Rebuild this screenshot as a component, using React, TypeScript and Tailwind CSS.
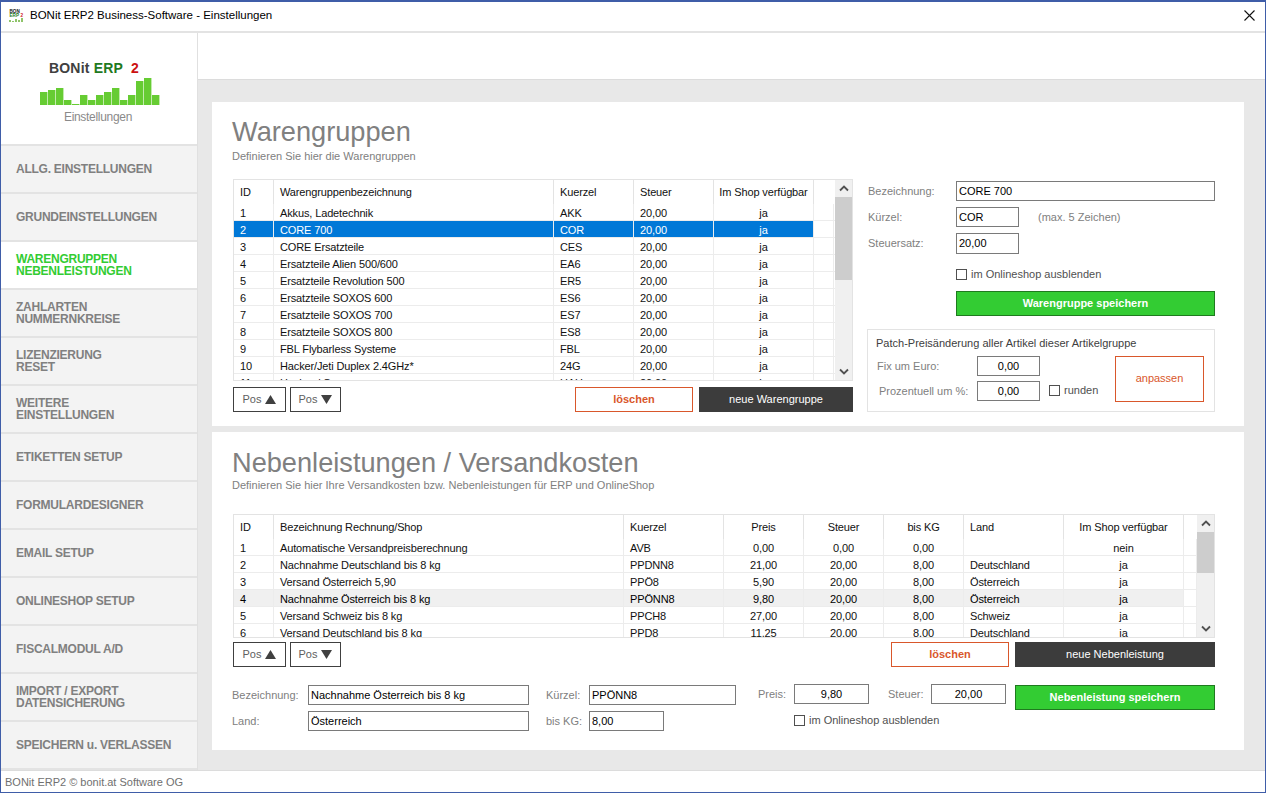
// App.tsx
// BONit ERP2 Einstellungen: Warengruppen und Nebenleistungen

const navItems = [
  ["ALLG. EINSTELLUNGEN"],
  ["GRUNDEINSTELLUNGEN"],
  ["WARENGRUPPEN", "NEBENLEISTUNGEN"],
  ["ZAHLARTEN", "NUMMERNKREISE"],
  ["LIZENZIERUNG", "RESET"],
  ["WEITERE", "EINSTELLUNGEN"],
  ["ETIKETTEN SETUP"],
  ["FORMULARDESIGNER"],
  ["EMAIL SETUP"],
  ["ONLINESHOP SETUP"],
  ["FISCALMODUL A/D"],
  ["IMPORT / EXPORT", "DATENSICHERUNG"],
  ["SPEICHERN u. VERLASSEN"],
];

const bars = [13, 15, 17, 5, 1, 10, 5, 10, 13, 17, 5, 10, 24, 27, 10];

type Col = { title: string; width: number; align?: "center" };

const groupCols: Col[] = [
  { title: "ID", width: 40 },
  { title: "Warengruppenbezeichnung", width: 280 },
  { title: "Kuerzel", width: 80 },
  { title: "Steuer", width: 80 },
  { title: "Im Shop verfügbar", width: 100, align: "center" },
];

const groupRows = [
  ["1", "Akkus, Ladetechnik", "AKK", "20,00", "ja"],
  ["2", "CORE 700", "COR", "20,00", "ja"],
  ["3", "CORE Ersatzteile", "CES", "20,00", "ja"],
  ["4", "Ersatzteile Alien 500/600", "EA6", "20,00", "ja"],
  ["5", "Ersatzteile Revolution 500", "ER5", "20,00", "ja"],
  ["6", "Ersatzteile SOXOS 600", "ES6", "20,00", "ja"],
  ["7", "Ersatzteile SOXOS 700", "ES7", "20,00", "ja"],
  ["8", "Ersatzteile SOXOS 800", "ES8", "20,00", "ja"],
  ["9", "FBL Flybarless Systeme", "FBL", "20,00", "ja"],
  ["10", "Hacker/Jeti Duplex 2.4GHz*", "24G", "20,00", "ja"],
  ["11", "Hacker / Graupner", "HAH", "20,00", "ja"],
];

const extraCols: Col[] = [
  { title: "ID", width: 40 },
  { title: "Bezeichnung Rechnung/Shop", width: 350 },
  { title: "Kuerzel", width: 100 },
  { title: "Preis", width: 80, align: "center" },
  { title: "Steuer", width: 80, align: "center" },
  { title: "bis KG", width: 80, align: "center" },
  { title: "Land", width: 100 },
  { title: "Im Shop verfügbar", width: 120, align: "center" },
];

const extraRows = [
  ["1", "Automatische Versandpreisberechnung", "AVB", "0,00", "0,00", "0,00", "", "nein"],
  ["2", "Nachnahme Deutschland bis 8 kg", "PPDNN8", "21,00", "20,00", "8,00", "Deutschland", "ja"],
  ["3", "Versand Österreich 5,90", "PPÖ8", "5,90", "20,00", "8,00", "Österreich", "ja"],
  ["4", "Nachnahme Österreich bis 8 kg", "PPÖNN8", "9,80", "20,00", "8,00", "Österreich", "ja"],
  ["5", "Versand Schweiz bis 8 kg", "PPCH8", "27,00", "20,00", "8,00", "Schweiz", "ja"],
  ["6", "Versand Deutschland bis 8 kg", "PPD8", "11,25", "20,00", "8,00", "Deutschland", "ja"],
];

function Chevron({ down }: { down?: boolean }) {
  return (
    <svg width="10" height="7" viewBox="0 0 10 7" className={down ? "rotate-180" : ""}>
      <path d="M1 5.5 L5 1.5 L9 5.5" fill="none" stroke="#505050" strokeWidth="1.8" />
    </svg>
  );
}

function Scrollbar({ thumbHeight }: { thumbHeight: number }) {
  return (
    <div className="w-[17px] shrink-0 bg-[#f0f0f0] flex flex-col">
      <div className="h-[17px] shrink-0 flex items-center justify-center">
        <Chevron />
      </div>
      <div className="flex-1">
        <div className="bg-[#cdcdcd]" style={{ height: thumbHeight }} />
      </div>
      <div className="h-[17px] shrink-0 flex items-center justify-center">
        <Chevron down />
      </div>
    </div>
  );
}

function DataTable({
  cols,
  rows,
  height,
  fillWidth,
  selected,
  selectedClass,
  thumbHeight,
}: {
  cols: Col[];
  rows: string[][];
  height: number;
  fillWidth: number;
  selected: number;
  selectedClass: string;
  thumbHeight: number;
}) {
  return (
    <div className="flex border border-[#e3e3e3] bg-white tracking-[-0.13px]" style={{ height }}>
      <div className="flex-1 min-w-0 overflow-hidden">
        <div className="flex h-[24px] text-[#111]">
          {cols.map((c) => (
            <div
              key={c.title}
              className={`h-[24px] leading-[24px] whitespace-nowrap border-r border-[#e3e3e3] ${c.align === "center" ? "text-center" : "pl-[6px]"}`}
              style={{ width: c.width }}
            >
              {c.title}
            </div>
          ))}
        </div>
        {rows.map((r, i) => (
          <div key={r[0]} className="flex h-[17px] border-b border-[#ececec]">
            <div className={`flex ${i === selected ? selectedClass : "text-[#111]"}`}>
              {r.map((v, j) => (
                <div
                  key={j}
                  className={`h-[16px] leading-[18px] whitespace-nowrap border-r border-[#ececec] ${cols[j].align === "center" ? "text-center" : "pl-[6px]"}`}
                  style={{ width: cols[j].width }}
                >
                  {v}
                </div>
              ))}
            </div>
            <div className="h-[16px] border-r border-[#ececec]" style={{ width: fillWidth }} />
          </div>
        ))}
      </div>
      <Scrollbar thumbHeight={thumbHeight} />
    </div>
  );
}

function PosButtons() {
  return (
    <div className="flex gap-[4px]">
      <button className="w-[53px] h-[25px] border border-[#404040] text-[#606060] flex items-center justify-center gap-[4px]">
        Pos
        <svg width="11" height="9" viewBox="0 0 11 9"><path d="M5.5 0 L11 9 L0 9 Z" fill="#404040" /></svg>
      </button>
      <button className="w-[51px] h-[25px] border border-[#404040] text-[#606060] flex items-center justify-center gap-[4px]">
        Pos
        <svg width="11" height="9" viewBox="0 0 11 9"><path d="M0 0 L11 0 L5.5 9 Z" fill="#404040" /></svg>
      </button>
    </div>
  );
}

function Field({ value, className }: { value: string; className: string }) {
  return (
    <div className={`border border-[#7a7a7a] bg-white text-black leading-[18px] whitespace-nowrap ${className}`}>{value}</div>
  );
}

function Check({ label }: { label: string }) {
  return (
    <div className="flex items-center gap-[4px] text-[#505050]">
      <span className="w-[11px] h-[11px] border border-[#505050] bg-white" />
      {label}
    </div>
  );
}

export default function App() {
  return (
    <div className="w-[1266px] h-[793px] overflow-hidden flex flex-col bg-white border border-[#3f5da8] border-t-2 text-[11px] [font-family:'Liberation_Sans',Arial,sans-serif]">
      {/* Titelleiste */}
      <div className="h-[31px] shrink-0 flex items-center pb-[2px] border-b-2 border-[#e3e3e3]">
        <svg width="15" height="15" viewBox="0 0 15 15" className="ml-[8px] mr-[6px]">
          <text x="0.5" y="4.5" fontSize="4.6" fontWeight="700" fill="#111">BON</text>
          <text x="0.5" y="9" fontSize="4.6" fontWeight="700" fill="#1f7a1f">ERP</text>
          <text x="11.5" y="9" fontSize="4.6" fontWeight="700" fill="#cc1111">2</text>
          <path d="M0 14h2v-2H0zM3 14h2v-1H3zM6 14h2v-3H6zM9 14h2v-2H9zM12 14h2v-4h-2z" fill="#8fc46a" />
        </svg>
        <span className="text-black text-[11.5px]">BONit ERP2 Business-Software - Einstellungen</span>
        <svg width="11" height="11" viewBox="0 0 11 11" className="ml-auto mr-[10px]">
          <path d="M0.5 0.5 L10.5 10.5 M10.5 0.5 L0.5 10.5" stroke="#111" strokeWidth="1.1" />
        </svg>
      </div>

      <div className="flex-1 flex min-h-0">
        {/* Seitenleiste */}
        <div className="w-[197px] shrink-0 flex flex-col border-r border-[#e0e0e0]">
          <div className="h-[113px] shrink-0 border-b-2 border-[#e3e3e3] flex flex-col items-center pt-[27px]">
            <div className="text-[14px] font-bold leading-[16px] tracking-[0.2px] mr-[10px]">
              <span className="text-[#404040]">BONit </span>
              <span className="text-[#1f7a1f]">ERP</span>
              <span className="text-[#cc1111]"> &nbsp;2</span>
            </div>
            <svg width="120" height="28" viewBox="0 0 120 28" className="mt-[1px] ml-[2px]">
              {bars.map((h, i) => (
                <rect key={i} x={i * 8} y={28 - h} width="7.4" height={h} fill="#66cc33" />
              ))}
            </svg>
            <div className="text-[#8a8a8a] text-[12px] tracking-[-0.3px] leading-[14px] mt-[5px] mr-[2px]">Einstellungen</div>
          </div>
          {navItems.map((lines, i) => (
            <div
              key={lines[0]}
              className={`h-[48px] shrink-0 pl-[15px] flex flex-col justify-center border-b-2 border-[#e3e3e3] font-bold text-[12px] tracking-[-0.25px] leading-[12px] ${
                i === 2 ? "bg-white text-[#33cc33]" : "bg-[#f3f3f3] text-[#808080]"
              }`}
            >
              {lines.map((l) => (
                <div key={l}>{l}</div>
              ))}
            </div>
          ))}
        </div>

        {/* Inhalt */}
        <div className="flex-1 min-w-0 flex flex-col">
          <div className="h-[47px] shrink-0 bg-white border-b border-[#dcdcdc]" />
          <div className="flex-1 bg-[#e8e8e8] pt-[22px] pl-[14px] pr-[21px] flex flex-col gap-[6px]">
            {/* Warengruppen */}
            <section className="h-[324px] bg-white pl-[20px] pt-[15px]">
              <h1 className="text-[27.2px] leading-[30px] text-[#808080]">Warengruppen</h1>
              <p className="text-[#808080] leading-[14px] mt-[2px]">Definieren Sie hier die Warengruppen</p>
              <div className="flex mt-[16px] ml-[1px]">
                <div className="w-[620px]">
                  <DataTable
                    cols={groupCols}
                    rows={groupRows}
                    height={202}
                    fillWidth={20}
                    selected={1}
                    selectedClass="bg-[#0078d7] text-white"
                    thumbHeight={83}
                  />
                  <div className="flex items-center mt-[6px]">
                    <PosButtons />
                    <button className="ml-auto w-[118px] h-[25px] border border-[#d9572b] text-[#d9572b] font-bold">löschen</button>
                    <button className="ml-[6px] w-[154px] h-[25px] bg-[#3c3c3c] text-white">neue Warengruppe</button>
                  </div>
                </div>

                <div className="w-[348px] ml-[14px] pt-[2px]">
                  <div className="flex items-center h-[20px]">
                    <span className="w-[89px] pl-[1px] text-[#808080]">Bezeichnung:</span>
                    <Field value="CORE 700" className="w-[259px] h-[20px] pl-[2px]" />
                  </div>
                  <div className="flex items-center h-[20px] mt-[6px]">
                    <span className="w-[89px] pl-[1px] text-[#808080]">Kürzel:</span>
                    <Field value="COR" className="w-[63px] h-[20px] pl-[2px]" />
                    <span className="ml-[19px] text-[#808080]">(max. 5 Zeichen)</span>
                  </div>
                  <div className="flex items-center h-[21px] mt-[6px]">
                    <span className="w-[89px] pl-[1px] text-[#808080]">Steuersatz:</span>
                    <Field value="20,00" className="w-[63px] h-[21px] pl-[2px]" />
                  </div>
                  <div className="ml-[89px] mt-[12px]">
                    <Check label="im Onlineshop ausblenden" />
                  </div>
                  <button className="ml-[89px] mt-[8px] w-[259px] h-[25px] bg-[#33cc33] border border-[#1f7a1f] text-white font-bold">
                    Warengruppe speichern
                  </button>
                  <div className="mt-[13px] h-[83px] border border-[#e3e3e3] pl-[8px] pt-[6px]">
                    <div className="text-[#404040] leading-[14px]">Patch-Preisänderung aller Artikel dieser Artikelgruppe</div>
                    <div className="flex mt-[1px]">
                      <div className="w-[101px] text-[#808080]">
                        <div className="h-[20px] mt-[5px] leading-[20px] pl-[1px]">Fix um Euro:</div>
                        <div className="h-[20px] mt-[5px] leading-[20px] pl-[3px]">Prozentuell um %:</div>
                      </div>
                      <div className="mt-[5px]">
                        <Field value="0,00" className="w-[63px] h-[20px] text-center" />
                        <div className="flex items-center mt-[5px]">
                          <Field value="0,00" className="w-[63px] h-[20px] text-center" />
                          <div className="ml-[9px]">
                            <Check label="runden" />
                          </div>
                        </div>
                      </div>
                      <button className="ml-auto mr-[10px] mt-[5px] w-[89px] h-[46px] border border-[#d9572b] text-[#d9572b]">anpassen</button>
                    </div>
                  </div>
                </div>
              </div>
            </section>

            {/* Nebenleistungen */}
            <section className="h-[318px] bg-white pl-[20px] pt-[16px]">
              <h1 className="text-[27.2px] leading-[30px] text-[#808080]">Nebenleistungen / Versandkosten</h1>
              <p className="text-[#808080] leading-[14px]">
                Definieren Sie hier Ihre Versandkosten bzw. Nebenleistungen für ERP und OnlineShop
              </p>
              <div className="ml-[1px] mt-[22px] w-[982px]">
                <DataTable
                  cols={extraCols}
                  rows={extraRows}
                  height={124}
                  fillWidth={14}
                  selected={3}
                  selectedClass="bg-[#f0f0f0] text-black"
                  thumbHeight={41}
                />
                <div className="flex items-center mt-[4px]">
                  <PosButtons />
                  <button className="ml-auto w-[118px] h-[25px] border border-[#d9572b] text-[#d9572b] font-bold">löschen</button>
                  <button className="ml-[6px] w-[200px] h-[25px] bg-[#3c3c3c] text-white">neue Nebenleistung</button>
                </div>
              </div>
              <div className="flex mt-[18px]">
                <div className="w-[76px] text-[#808080]">
                  <div className="h-[20px] leading-[20px]">Bezeichnung:</div>
                  <div className="h-[20px] leading-[20px] mt-[6px]">Land:</div>
                </div>
                <div className="w-[221px]">
                  <Field value="Nachnahme Österreich bis 8 kg" className="w-[221px] h-[20px] pl-[2px]" />
                  <Field value="Österreich" className="w-[221px] h-[20px] pl-[2px] mt-[6px]" />
                </div>
                <div className="w-[43px] ml-[17px] text-[#808080]">
                  <div className="h-[20px] leading-[20px]">Kürzel:</div>
                  <div className="h-[20px] leading-[20px] mt-[6px]">bis KG:</div>
                </div>
                <div className="w-[147px]">
                  <Field value="PPÖNN8" className="w-[147px] h-[20px] pl-[2px]" />
                  <Field value="8,00" className="w-[75px] h-[20px] pl-[2px] mt-[6px]" />
                </div>
                <div className="ml-[22px] -mt-[1px]">
                  <div className="flex items-center">
                    <span className="text-[#808080] w-[36px]">Preis:</span>
                    <Field value="9,80" className="w-[75px] h-[20px] text-center" />
                    <span className="text-[#808080] ml-[19px] w-[43px]">Steuer:</span>
                    <Field value="20,00" className="w-[75px] h-[20px] text-center" />
                  </div>
                  <div className="mt-[8px] ml-[36px]">
                    <Check label="im Onlineshop ausblenden" />
                  </div>
                </div>
                <button className="ml-[9px] w-[200px] h-[25px] bg-[#33cc33] border border-[#1f7a1f] text-white font-bold">
                  Nebenleistung speichern
                </button>
              </div>
            </section>
          </div>
        </div>
      </div>

      {/* Statusleiste */}
      <div className="h-[22px] shrink-0 border-t border-[#dcdcdc] pl-[4px] leading-[22px] text-[#707070]">BONit ERP2 © bonit.at Software OG</div>
    </div>
  );
}
